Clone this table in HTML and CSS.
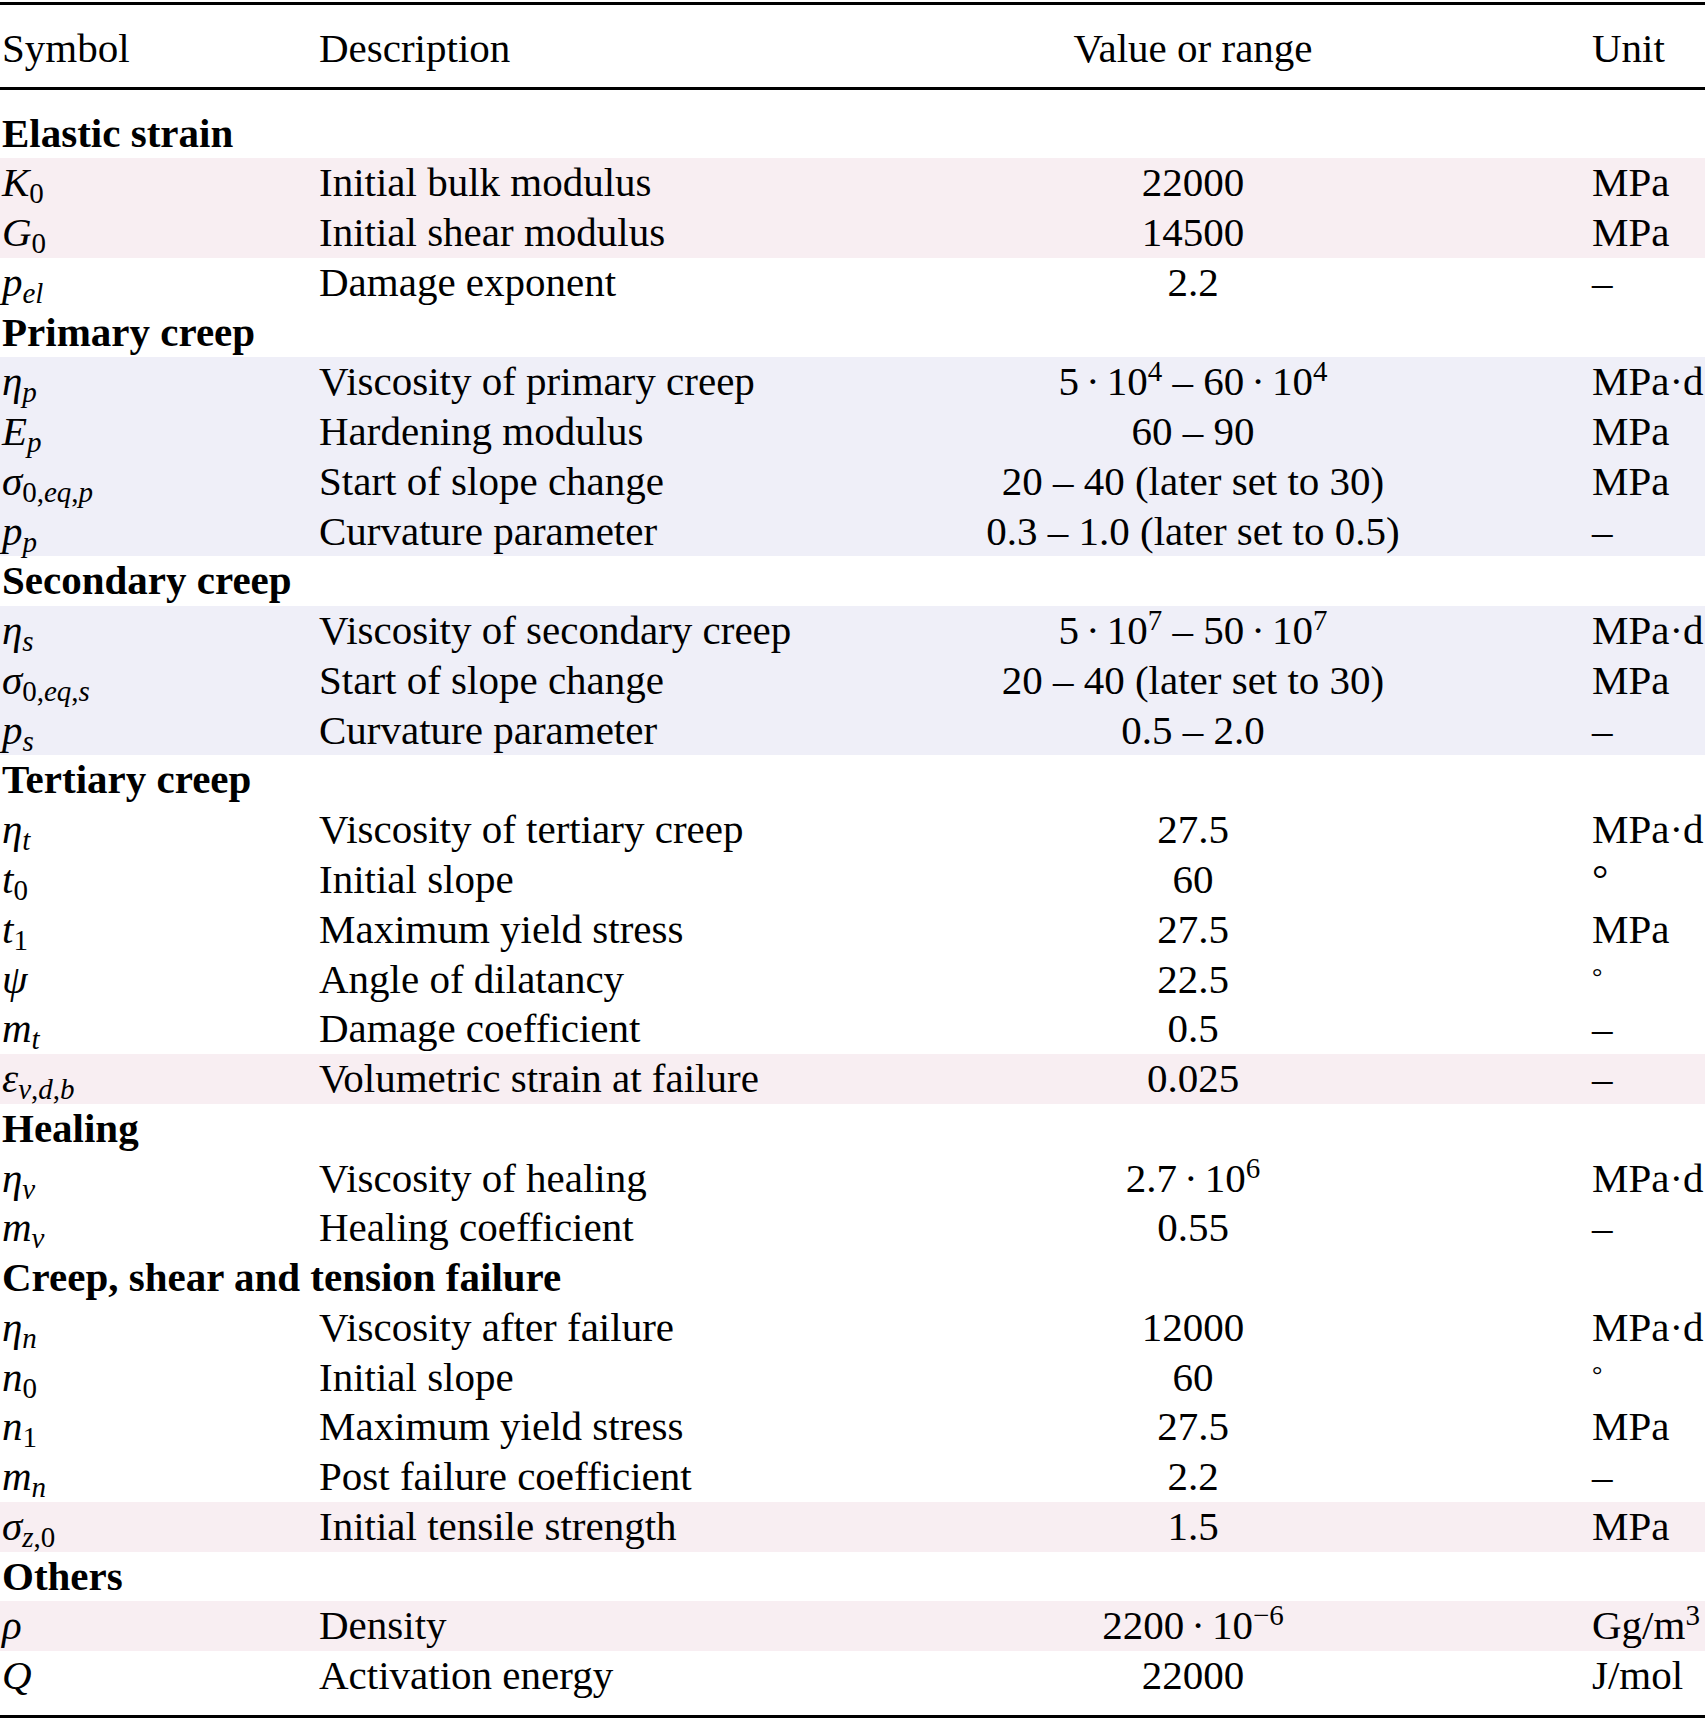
FILE: index.html
```html
<!DOCTYPE html>
<html lang="en">
<head>
<meta charset="utf-8">
<title>Model parameters</title>
<link rel="stylesheet" href="styles.css">
</head>
<body>
<div class="table">
  <div class="row head">
    <div class="c1">Symbol</div>
    <div class="c2">Description</div>
    <div class="c3">Value or range</div>
    <div class="c4">Unit</div>
  </div>
  <div class="tbody">
    <div class="row section"><div class="span">Elastic strain</div></div>
    <div class="group pink">
      <div class="row"><div class="c1"><i>K</i><sub>0</sub></div><div class="c2">Initial bulk modulus</div><div class="c3">22000</div><div class="c4">MPa</div></div>
      <div class="row"><div class="c1"><i>G</i><sub>0</sub></div><div class="c2">Initial shear modulus</div><div class="c3">14500</div><div class="c4">MPa</div></div>
    </div>
    <div class="row"><div class="c1"><i>p</i><sub><i>el</i></sub></div><div class="c2">Damage exponent</div><div class="c3">2.2</div><div class="c4">–</div></div>

    <div class="row section"><div class="span">Primary creep</div></div>
    <div class="group blue">
      <div class="row"><div class="c1"><i>η</i><sub><i>p</i></sub></div><div class="c2">Viscosity of primary creep</div><div class="c3">5<span class="dot">·</span>10<sup>4</sup> – 60<span class="dot">·</span>10<sup>4</sup></div><div class="c4">MPa·d</div></div>
      <div class="row"><div class="c1"><i>E</i><sub><i>p</i></sub></div><div class="c2">Hardening modulus</div><div class="c3">60 – 90</div><div class="c4">MPa</div></div>
      <div class="row"><div class="c1"><i>σ</i><sub>0,<i>eq</i>,<i>p</i></sub></div><div class="c2">Start of slope change</div><div class="c3">20 – 40 (later set to 30)</div><div class="c4">MPa</div></div>
      <div class="row"><div class="c1"><i>p</i><sub><i>p</i></sub></div><div class="c2">Curvature parameter</div><div class="c3">0.3 – 1.0 (later set to 0.5)</div><div class="c4">–</div></div>
    </div>

    <div class="row section"><div class="span">Secondary creep</div></div>
    <div class="group blue">
      <div class="row"><div class="c1"><i>η</i><sub><i>s</i></sub></div><div class="c2">Viscosity of secondary creep</div><div class="c3">5<span class="dot">·</span>10<sup>7</sup> – 50<span class="dot">·</span>10<sup>7</sup></div><div class="c4">MPa·d</div></div>
      <div class="row"><div class="c1"><i>σ</i><sub>0,<i>eq</i>,<i>s</i></sub></div><div class="c2">Start of slope change</div><div class="c3">20 – 40 (later set to 30)</div><div class="c4">MPa</div></div>
      <div class="row"><div class="c1"><i>p</i><sub><i>s</i></sub></div><div class="c2">Curvature parameter</div><div class="c3">0.5 – 2.0</div><div class="c4">–</div></div>
    </div>

    <div class="row section"><div class="span">Tertiary creep</div></div>
    <div class="row"><div class="c1"><i>η</i><sub><i>t</i></sub></div><div class="c2">Viscosity of tertiary creep</div><div class="c3">27.5</div><div class="c4">MPa·d</div></div>
    <div class="row"><div class="c1"><i>t</i><sub>0</sub></div><div class="c2">Initial slope</div><div class="c3">60</div><div class="c4"><span class="deg-big">°</span></div></div>
    <div class="row"><div class="c1"><i>t</i><sub>1</sub></div><div class="c2">Maximum yield stress</div><div class="c3">27.5</div><div class="c4">MPa</div></div>
    <div class="row"><div class="c1"><i>ψ</i></div><div class="c2">Angle of dilatancy</div><div class="c3">22.5</div><div class="c4"><span class="deg-small">°</span></div></div>
    <div class="row"><div class="c1"><i>m</i><sub><i>t</i></sub></div><div class="c2">Damage coefficient</div><div class="c3">0.5</div><div class="c4">–</div></div>
    <div class="group pink">
      <div class="row"><div class="c1"><i>ε</i><sub><i>v</i>,<i>d</i>,<i>b</i></sub></div><div class="c2">Volumetric strain at failure</div><div class="c3">0.025</div><div class="c4">–</div></div>
    </div>

    <div class="row section"><div class="span">Healing</div></div>
    <div class="row"><div class="c1"><i>η</i><sub><i>v</i></sub></div><div class="c2">Viscosity of healing</div><div class="c3">2.7<span class="dot">·</span>10<sup>6</sup></div><div class="c4">MPa·d</div></div>
    <div class="row"><div class="c1"><i>m</i><sub><i>v</i></sub></div><div class="c2">Healing coefficient</div><div class="c3">0.55</div><div class="c4">–</div></div>

    <div class="row section"><div class="span">Creep, shear and tension failure</div></div>
    <div class="row"><div class="c1"><i>η</i><sub><i>n</i></sub></div><div class="c2">Viscosity after failure</div><div class="c3">12000</div><div class="c4">MPa·d</div></div>
    <div class="row"><div class="c1"><i>n</i><sub>0</sub></div><div class="c2">Initial slope</div><div class="c3">60</div><div class="c4"><span class="deg-small">°</span></div></div>
    <div class="row"><div class="c1"><i>n</i><sub>1</sub></div><div class="c2">Maximum yield stress</div><div class="c3">27.5</div><div class="c4">MPa</div></div>
    <div class="row"><div class="c1"><i>m</i><sub><i>n</i></sub></div><div class="c2">Post failure coefficient</div><div class="c3">2.2</div><div class="c4">–</div></div>
    <div class="group pink">
      <div class="row"><div class="c1"><i>σ</i><sub><i>z</i>,0</sub></div><div class="c2">Initial tensile strength</div><div class="c3">1.5</div><div class="c4">MPa</div></div>
    </div>

    <div class="row section"><div class="span">Others</div></div>
    <div class="group pink">
      <div class="row"><div class="c1"><i>ρ</i></div><div class="c2">Density</div><div class="c3">2200<span class="dot">·</span>10<sup>−6</sup></div><div class="c4">Gg/m<sup>3</sup></div></div>
    </div>
    <div class="row"><div class="c1"><i>Q</i></div><div class="c2">Activation energy</div><div class="c3">22000</div><div class="c4">J/mol</div></div>
  </div>
  <div class="bottom-rule"></div>
</div>
</body>
</html>
```
FILE: styles.css
```css
html, body {
  margin: 0;
  padding: 0;
  background: #ffffff;
}

body {
  font-family: "Liberation Serif", "Times New Roman", serif;
  font-size: 41px;
  color: #000000;
}

.table {
  width: 1705px;
  padding-top: 2px;
}

.row {
  display: grid;
  grid-template-columns: 319px 475px 798px 113px;
  height: 49.77px;
  line-height: 49.77px;
  white-space: nowrap;
}

.c1 {
  padding-left: 2px;
}

.c3 {
  text-align: center;
}

.c4 {
  text-align: left;
}

.head {
  box-sizing: border-box;
  height: 88px;
  padding-top: 19.3px;
  border-top: 3px solid #000000;
  border-bottom: 3px solid #000000;
}

.tbody {
  padding-top: 18.5px;
}

.section .span {
  grid-column: 1 / -1;
  padding-left: 2px;
  font-weight: bold;
}

.pink {
  background: #f8eef2;
}

.blue {
  background: #efeff8;
}

i {
  font-style: italic;
}

sub {
  font-size: 29px;
  line-height: 0;
  vertical-align: -7px;
}

sup {
  font-size: 29px;
  line-height: 0;
  vertical-align: 14px;
}

.dot {
  margin: 0 7px;
}

.deg-big {
  font-size: 41px;
}

.deg-small {
  display: inline-block;
  font-size: 26px;
  line-height: 0;
  vertical-align: 8px;
}

.bottom-rule {
  margin-top: 14px;
  border-top: 3px solid #000000;
}
```
